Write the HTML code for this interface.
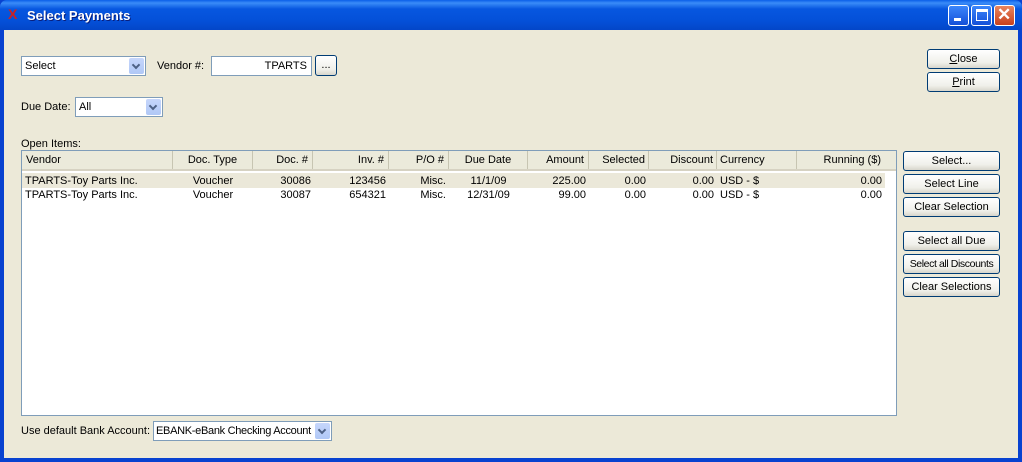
<!DOCTYPE html>
<html><head><style>
*{margin:0;padding:0;box-sizing:border-box}
body{width:1022px;height:462px;overflow:hidden;background:#0842d0;font-family:"Liberation Sans",sans-serif;font-size:11px;color:#000;position:relative}
.a{position:absolute}
#title{left:0;top:0;width:1022px;height:30px;background:linear-gradient(#0a5fe8 0%,#3a8cf8 10%,#0757e0 30%,#0450d8 70%,#0346c8 100%);border-radius:7px 7px 0 0}
#client{left:4px;top:30px;width:1014px;height:428px;background:#ece9d8}
.btn{position:absolute;border:1px solid #003c74;border-radius:3px;background:linear-gradient(#fff,#f0f0ea 70%,#d8d6cc);text-align:center;line-height:18px;font-size:11px}
.cb{position:absolute;background:#fff;border:1px solid #7f9db9;line-height:18px;padding-left:3px;white-space:nowrap;overflow:hidden}
.cb i{position:absolute;right:1px;top:1px;width:15px;height:16px;background:linear-gradient(#c6d6fb,#b0c8f6);border-radius:2px}
.cb i:after{content:"";position:absolute;left:4px;top:4px;width:4px;height:4px;border-right:2px solid #4d6185;border-bottom:2px solid #4d6185;transform:rotate(45deg)}
.h{position:absolute;top:0;height:18px;line-height:18px;border-right:1px solid #c7c5b2}
.r{position:absolute;height:14px;line-height:14px}
.tb{position:absolute;top:5px;width:21px;height:21px;border:1px solid #fff;border-radius:3px;background:linear-gradient(#3b86fb,#1450d8)}
</style></head><body>
<div id="title" class="a">
<div class="a" style="left:8px;top:6px;color:#d02020;font-weight:bold;font-size:14px">X</div>
<div class="a" style="left:27px;top:8px;color:#fff;font-weight:bold;font-size:13px;text-shadow:1px 1px #0a1e7a">Select Payments</div>
<div class="tb" style="left:948px"><div class="a" style="left:5px;top:12px;width:7px;height:3px;background:#fff"></div></div>
<div class="tb" style="left:971px"><div class="a" style="left:4px;top:3px;width:12px;height:12px;border:1px solid #fff;border-top:3px solid #fff"></div></div>
<div class="tb" style="left:994px;background:linear-gradient(#e8855e,#c8401c)"><div class="a" style="left:2px;top:-1px;color:#fff;font-size:17px;font-weight:bold">✕</div></div>
</div>
<div id="client" class="a"></div>

<div class="cb" style="left:21px;top:56px;width:125px;height:20px">Select<i></i></div>
<div class="a" style="left:157px;top:60px">Vendor #:</div>
<div class="cb" style="left:211px;top:56px;width:101px;height:20px;text-align:right;padding-right:4px">TPARTS</div>
<div class="btn" style="left:315px;top:55px;width:22px;height:21px">...</div>
<div class="a" style="left:21px;top:101px">Due Date:</div>
<div class="cb" style="left:75px;top:97px;width:88px;height:20px">All<i></i></div>

<div class="btn" style="left:927px;top:49px;width:73px;height:20px"><u>C</u>lose</div>
<div class="btn" style="left:927px;top:72px;width:73px;height:20px"><u>P</u>rint</div>

<div class="a" style="left:21px;top:138px">Open Items:</div>
<div class="a" style="left:21px;top:150px;width:876px;height:266px;background:#fff;border:1px solid #7f9db9">
<div class="a" style="left:0;top:0;width:874px;height:20px;background:#ebeadb;border-bottom:2px solid #d6d2c2">
<div class="h" style="left:0;width:151px;padding-left:4px">Vendor</div>
<div class="h" style="left:151px;width:80px;text-align:center">Doc. Type</div>
<div class="h" style="left:231px;width:60px;text-align:right;padding-right:4px">Doc. #</div>
<div class="h" style="left:291px;width:76px;text-align:right;padding-right:4px">Inv. #</div>
<div class="h" style="left:367px;width:60px;text-align:right;padding-right:4px">P/O #</div>
<div class="h" style="left:427px;width:79px;text-align:center">Due Date</div>
<div class="h" style="left:506px;width:61px;text-align:right;padding-right:4px">Amount</div>
<div class="h" style="left:567px;width:60px;text-align:right;padding-right:3px">Selected</div>
<div class="h" style="left:627px;width:68px;text-align:right;padding-right:3px">Discount</div>
<div class="h" style="left:695px;width:80px;padding-left:3px">Currency</div>
<div class="h" style="left:775px;width:88px;text-align:right;padding-right:4px;border-right:none">Running ($)</div>
</div>
<div class="a" style="left:0;top:22px;width:863px;height:15px;background:#ebe8d9"></div>
<div style="position:absolute;left:0;top:23px;width:874px">
<div class="r" style="left:3px">TPARTS-Toy Parts Inc.</div><div class="r" style="left:151px;width:80px;text-align:center">Voucher</div><div class="r" style="left:231px;width:58px;text-align:right">30086</div><div class="r" style="left:291px;width:73px;text-align:right">123456</div><div class="r" style="left:367px;width:57px;text-align:right">Misc.</div><div class="r" style="left:427px;width:79px;text-align:center">11/1/09</div><div class="r" style="left:506px;width:58px;text-align:right">225.00</div><div class="r" style="left:567px;width:57px;text-align:right">0.00</div><div class="r" style="left:627px;width:65px;text-align:right">0.00</div><div class="r" style="left:698px">USD - $</div><div class="r" style="left:775px;width:85px;text-align:right">0.00</div>
</div>
<div style="position:absolute;left:0;top:37px;width:874px">
<div class="r" style="left:3px">TPARTS-Toy Parts Inc.</div><div class="r" style="left:151px;width:80px;text-align:center">Voucher</div><div class="r" style="left:231px;width:58px;text-align:right">30087</div><div class="r" style="left:291px;width:73px;text-align:right">654321</div><div class="r" style="left:367px;width:57px;text-align:right">Misc.</div><div class="r" style="left:427px;width:79px;text-align:center">12/31/09</div><div class="r" style="left:506px;width:58px;text-align:right">99.00</div><div class="r" style="left:567px;width:57px;text-align:right">0.00</div><div class="r" style="left:627px;width:65px;text-align:right">0.00</div><div class="r" style="left:698px">USD - $</div><div class="r" style="left:775px;width:85px;text-align:right">0.00</div>
</div>
</div>

<div class="btn" style="left:903px;top:151px;width:97px;height:20px">Select...</div>
<div class="btn" style="left:903px;top:174px;width:97px;height:20px">Select Line</div>
<div class="btn" style="left:903px;top:197px;width:97px;height:20px">Clear Selection</div>
<div class="btn" style="left:903px;top:231px;width:97px;height:20px">Select all Due</div>
<div class="btn" style="left:903px;top:254px;width:97px;height:20px;letter-spacing:-0.4px;font-size:10.5px">Select all Discounts</div>
<div class="btn" style="left:903px;top:277px;width:97px;height:20px">Clear Selections</div>

<div class="a" style="left:21px;top:425px">Use default Bank Account:</div>
<div class="cb" style="left:153px;top:421px;width:179px;height:20px;letter-spacing:-0.3px;padding-left:2px">EBANK-eBank Checking Account<i></i></div>
</body></html>
